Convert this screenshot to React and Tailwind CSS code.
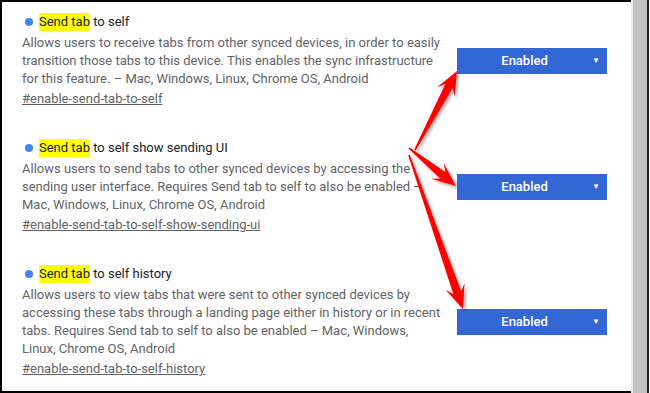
import React from "react";

const flags = [
  {
    title: "to self",
    desc: "Allows users to receive tabs from other synced devices, in order to easily transition those tabs to this device. This enables the sync infrastructure for this feature. – Mac, Windows, Linux, Chrome OS, Android",
    link: "#enable-send-tab-to-self",
  },
  {
    title: "to self show sending UI",
    desc: "Allows users to send tabs to other synced devices by accessing the sending user interface. Requires Send tab to self to also be enabled – Mac, Windows, Linux, Chrome OS, Android",
    link: "#enable-send-tab-to-self-show-sending-ui",
  },
  {
    title: "to self history",
    desc: "Allows users to view tabs that were sent to other synced devices by accessing these tabs through a landing page either in history or in recent tabs. Requires Send tab to self to also be enabled – Mac, Windows, Linux, Chrome OS, Android",
    link: "#enable-send-tab-to-self-history",
  },
];

// tapered annotation arrow, thin tail -> fat head
function arrowPoints(tx, ty, px, py) {
  const len = Math.hypot(px - tx, py - ty);
  const dx = (px - tx) / len;
  const dy = (py - ty) / len;
  const nx = -dy;
  const ny = dx;
  const H = 24;
  const HW = 10;
  const w0 = 0.8;
  const w1 = 4.2;
  const bx = px - dx * (H - 7);
  const by = py - dy * (H - 7);
  const hx = px - dx * H;
  const hy = py - dy * H;
  const pts = [
    [tx + nx * w0, ty + ny * w0],
    [bx + nx * w1, by + ny * w1],
    [hx + nx * HW, hy + ny * HW],
    [px, py],
    [hx - nx * HW, hy - ny * HW],
    [bx - nx * w1, by - ny * w1],
    [tx - nx * w0, ty - ny * w0],
  ];
  return pts.map((p) => p.map((v) => v.toFixed(1)).join(",")).join(" ");
}

function FlagRow({ flag, last }) {
  return (
    <div className={`flex items-center ${last ? "" : "mb-[31px]"}`}>
      <div className="w-[420px] shrink-0">
        <div className="flex items-center text-[13px] leading-[18px] text-[#202124]">
          <span className="ml-[3px] mr-[6px] inline-block h-[8px] w-[8px] rounded-full bg-[#4285f4]" />
          <span className="bg-[#ffff00]">Send tab</span>
          <span>&nbsp;{flag.title}</span>
        </div>
        <p className="mt-[3px] text-[13px] leading-[18px] text-[#5f6368]">{flag.desc}</p>
        <a className="mt-[2px] block text-[13px] leading-[18px] text-[#5f6368] underline">{flag.link}</a>
      </div>
      <div className="ml-[15px] flex h-[26px] w-[150px] shrink-0 items-center bg-[#3367d6] text-white">
        <span className="flex-1 text-center text-[13px] font-medium">Enabled</span>
        <span className="mr-[7px] text-[8px]">▼</span>
      </div>
    </div>
  );
}

export default function App() {
  return (
    <div className="relative flex h-[393px] w-[650px] overflow-hidden bg-white" style={{ fontFamily: "Roboto, 'Liberation Sans', sans-serif" }}>
      <div className="w-[631px] shrink-0 border-y-2 border-l-2 border-black pl-[20px] pt-[11px]">
        {flags.map((f, i) => (
          <FlagRow key={f.link} flag={f} last={i === flags.length - 1} />
        ))}
      </div>
      <div className="w-[2px] bg-[#ececec]" />
      <div className="w-[14px] bg-[#c1c1c1]" />
      <div className="w-[2px] bg-[#222]" />
      <div className="w-[1px] bg-white" />

      <svg className="pointer-events-none absolute inset-0" width="650" height="393">
        <defs>
          <filter id="sh" x="-20%" y="-20%" width="140%" height="140%">
            <feDropShadow dx="2" dy="2" stdDeviation="1.5" floodColor="#000" floodOpacity="0.35" />
          </filter>
        </defs>
        <g fill="#ff0000" filter="url(#sh)">
          <polygon points={arrowPoints(415, 150, 457, 71)} />
          <polygon points={arrowPoints(409, 148, 456, 186)} />
          <polygon points={arrowPoints(409, 155, 463, 309)} />
        </g>
      </svg>
    </div>
  );
}
